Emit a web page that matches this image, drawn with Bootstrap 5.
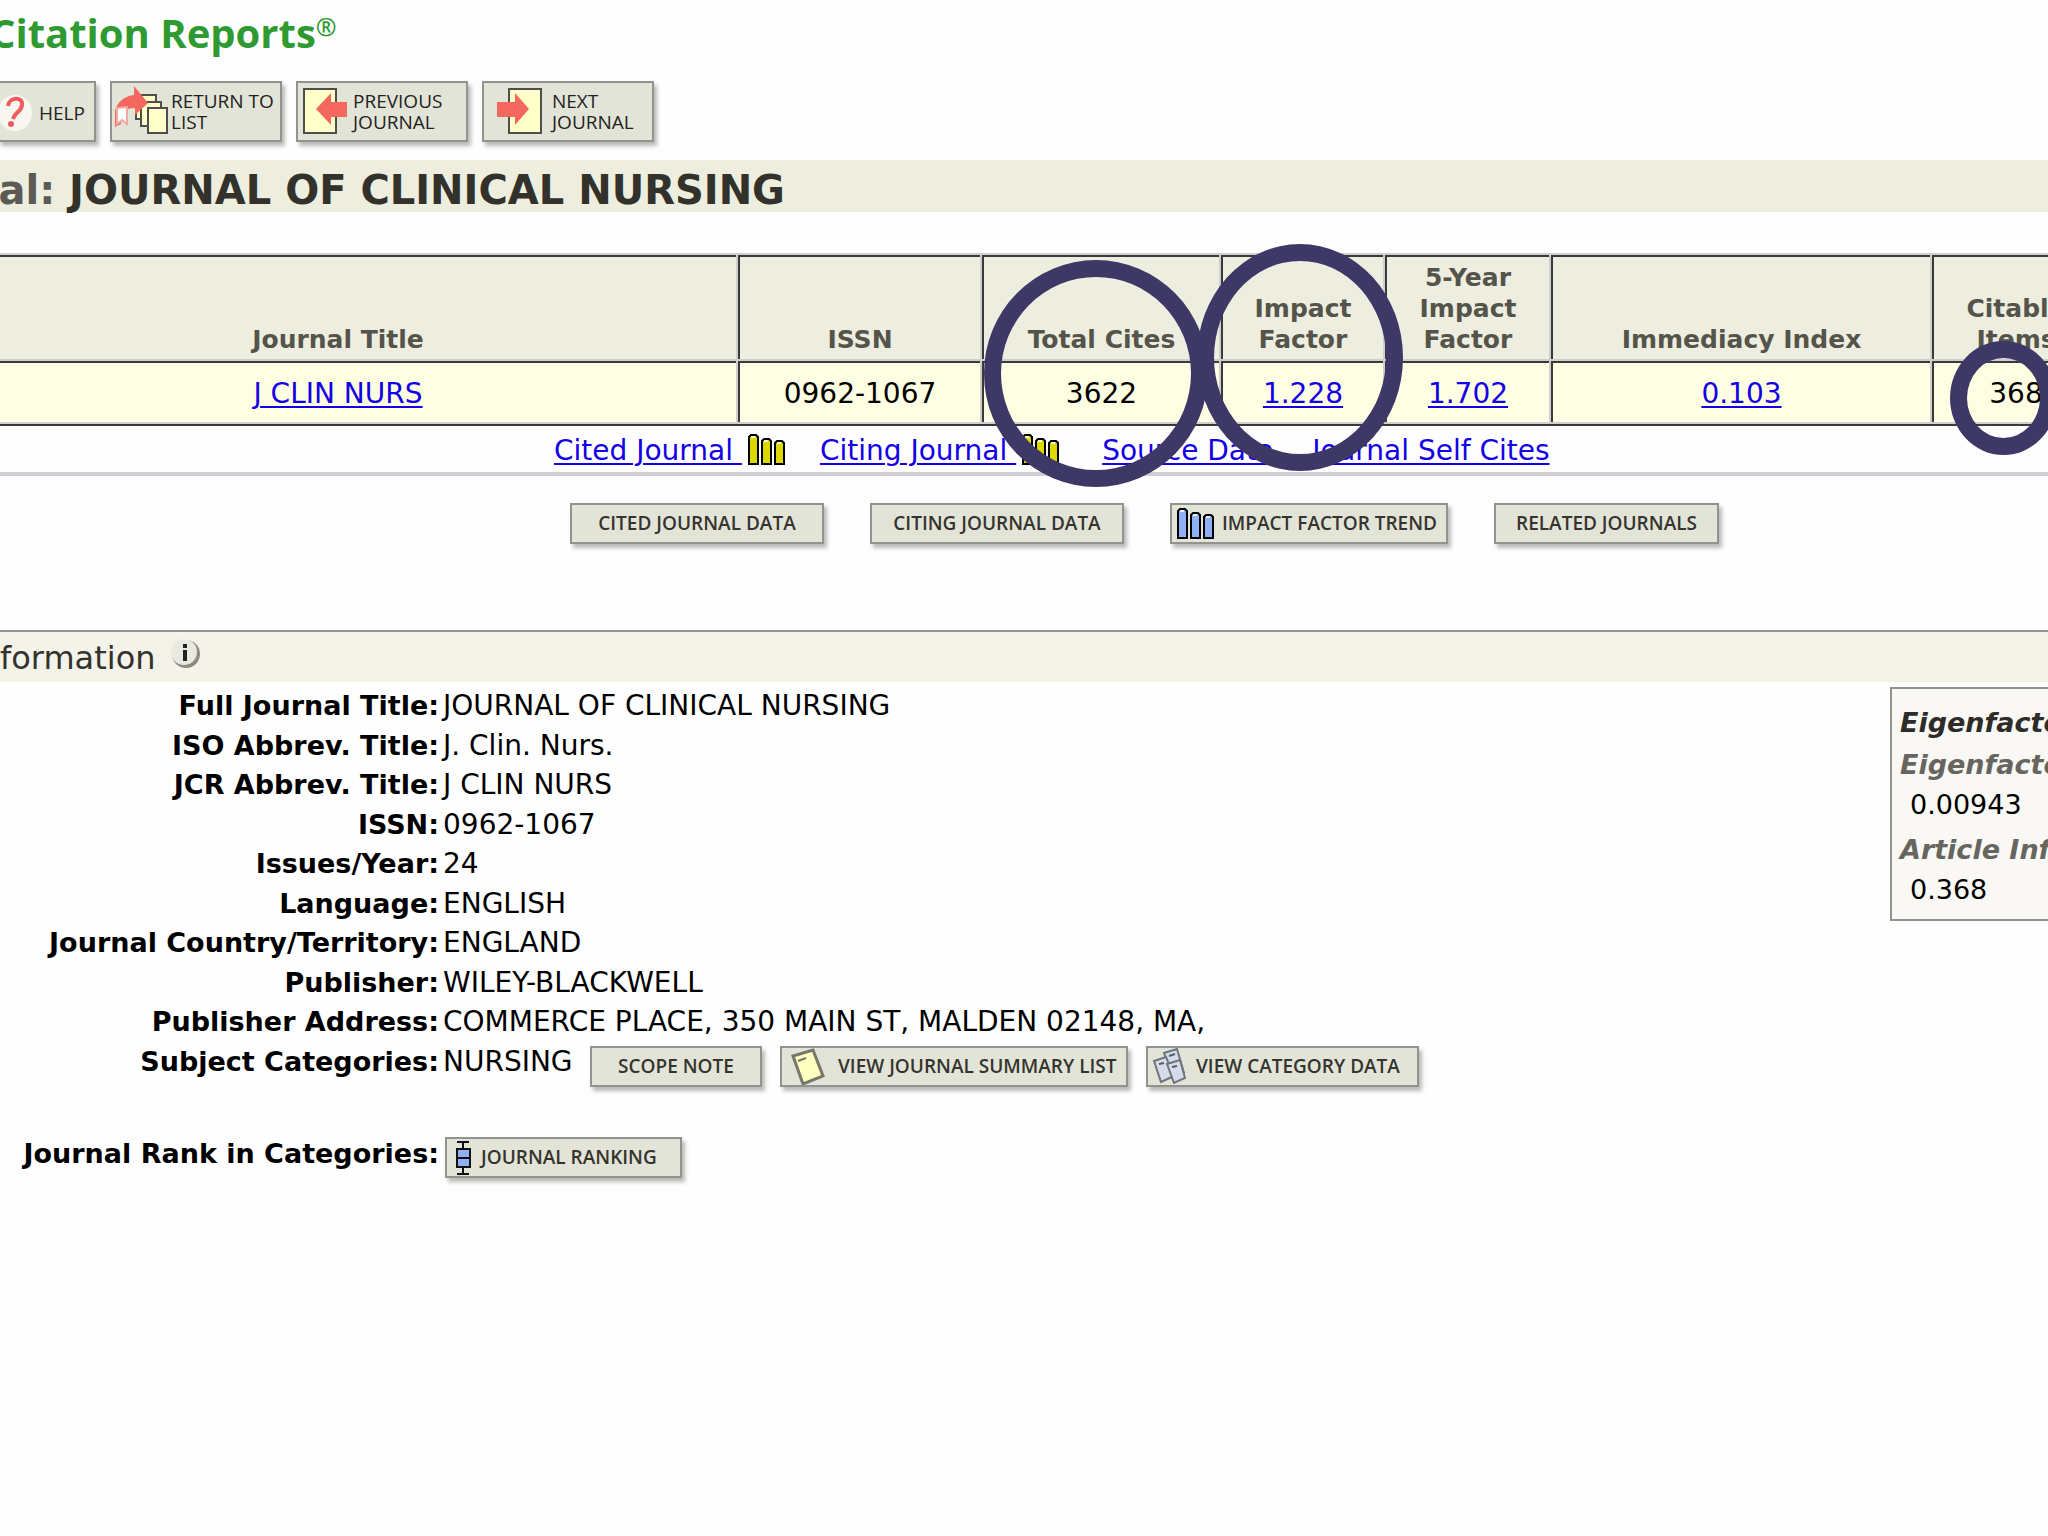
<!DOCTYPE html>
<html lang="en">
<head>
<meta charset="utf-8">
<meta name="viewport" content="width=device-width, initial-scale=1">
<title>Journal Citation Reports</title>
<link href="https://cdn.jsdelivr.net/npm/bootstrap@5.3.0/dist/css/bootstrap.min.css" rel="stylesheet">
<style>
body{font-family:"DejaVu Sans",Verdana,sans-serif;font-size:28px;line-height:39px;color:#000;background:#fefefe;overflow-x:hidden}
a{color:#1400e6;text-decoration:underline;text-underline-offset:3px;text-decoration-thickness:2px}
.brand-line{font:700 40px/50px "Open Sans","Noto Sans",sans-serif;color:#2e9a31;height:81px;padding-top:8px;margin-left:-10px;white-space:nowrap}
.brand-line sup{font-size:25px;top:-12px;line-height:0;font-weight:600}
.tool-row{gap:14px}
.tool-btn{font-family:"Open Sans","Noto Sans",sans-serif;font-size:19px;line-height:21px;color:#22221e;background:#e3e4d8;border:2px solid #92938f;border-radius:0;padding:0;box-shadow:3px 4px 4px #b9b9b6;text-align:left;display:inline-flex;align-items:center;white-space:nowrap}
.tool-btn svg{flex:none}
.big-btn{height:61px;width:172px;font-weight:500}
.help-btn{width:98px;margin-left:-2px;border-left:0}
.small-btn{height:41px;font-weight:600;color:#35342e}
.w-cite{width:254px}.w-trend{width:278px}.w-rel{width:225px}.w-scope{width:172px}.w-sum{width:348px}.w-cat{width:273px}.w-rank{width:237px}
.title-band{background:#edeedd;height:52px;margin-top:18px;font-size:40px;line-height:60px;font-weight:bold;color:#32312b;white-space:nowrap;margin-bottom:41px}
.title-band span{color:#5b5a54;margin-left:-30px}
.grid-table{width:calc(100% + 116px);table-layout:fixed;border-collapse:separate;border-spacing:2px;background:#cfcfcd;margin-left:-64px;border-bottom:2px solid #3a393c}
.grid-table th,.grid-table td{position:relative;text-align:center;border-left:2px solid #3a393c;border-top:2px solid #3a393c;padding:0}
.grid-table th{background:#edeedf;color:#55544b;font-size:25px;line-height:31px;height:104px;padding-bottom:4px;vertical-align:bottom}
.grid-table td{background:#fdfee2;height:60px;line-height:57px;padding-top:2px}
.c-title{width:798px}.c-issn{width:242px}.c-cites{width:237px}.c-impact{width:162px}.c-five{width:164px}.c-imm{width:379px}
.ring{position:absolute;z-index:2;border:17px solid #3d3866;border-radius:50%;pointer-events:none}
.ring-cites{left:0;top:-103px;width:224px;height:227px}
.ring-impact{left:-26px;top:-119px;width:206px;height:227px}
.ring-items{left:16px;top:-22px;width:107px;height:114px}
.link-row{height:50px;line-height:50px;padding-left:554px;border-bottom:4px solid #cfced2;white-space:nowrap}
.link-row svg{margin:8px 35px 0 5px}
.link-row .self-cites{margin-left:38px}
.link-row .source-data{margin-left:8px}
.btn-row{margin-top:27px;padding-left:570px;gap:46px}
.info-band{margin-top:86px;height:52px;background:#f3f3e9;border-top:2px solid #929292;font-size:32px;line-height:52px;color:#33322c}
.info-band svg{margin:5px 0 0 14px}
.facts{display:grid;grid-template-columns:439px 1fr;column-gap:4px;grid-template-rows:repeat(9,1fr) auto;height:401px;margin:4px 0 0}
.facts dt,.rank-label{font-size:27px;font-weight:bold;text-align:right;white-space:nowrap}
.facts dd{margin:0;white-space:nowrap}
.cat-name{width:147px}
.cat-btns{gap:18px}
.eigen-box{width:158px;height:234px;margin-top:5px;border:2px solid #929292;border-right:0;background:#f9f8f4;padding:13px 0 0 8px;overflow:hidden;white-space:nowrap;font-size:27px;line-height:42px}
.eigen-box em{display:block;font-weight:bold;color:#66665f}
.eigen-box em.top-line{color:#2d2c28}
.eigen-box span{display:block;padding-left:10px;line-height:37px;margin-bottom:6px}
.rank-row{margin-top:50px;padding-bottom:20px;gap:6px}
.rank-label{width:439px;line-height:34px}
</style>
<script src="https://cdn.jsdelivr.net/npm/bootstrap@5.3.0/dist/js/bootstrap.bundle.min.js"></script>
</head>
<body>
<svg class="d-none" aria-hidden="true">
  <symbol id="bars" viewBox="0 0 38 31">
    <g stroke="#000" stroke-width="2"><path d="M2 30V3l2-2h5l2 2v27z"/><path d="M15 30V7l2-2h5l2 2v23z"/><path d="M28 30V9l2-2h5l2 2v21z"/></g>
    <path d="M4 3h4M17 7h4M30 9h4" stroke="#fff" stroke-width="2" opacity=".8"/>
  </symbol>
</svg>
<header>
  <div class="brand-line">Citation Reports<sup>®</sup></div>
  <nav class="tool-row d-flex" aria-label="Journal tools">
    <button class="tool-btn big-btn help-btn" type="button"><svg width="41" height="50" viewBox="0 0 41 50"><ellipse cx="17" cy="26" rx="17" ry="18" fill="#f8f6f0"/><path d="M10 19c1-9 15-10 14-1-1 8-7 6-9 14" fill="none" stroke="#ee5c60" stroke-width="4"/><circle cx="13" cy="37" r="3" fill="#ee5c60"/></svg><span class="pt-1">HELP</span></button>
    <button class="tool-btn big-btn" type="button"><svg width="59" height="57" viewBox="0 0 59 57"><g fill="#ffffc9" stroke="#4e4e4a" stroke-width="2"><path d="M24 12h20v24H24z"/><path d="M29 19h20v24H29z"/><path d="M36 25h19v25H36z"/></g><path d="M3 28C5 18 14 13 22 12V3l14 17-13 12v-7c-10 0-13 4-14 16l-6 3z" fill="#f4675f"/><path d="M5 25l10-1v17l-5-4-5 4z" fill="#fff" stroke="#f3a9a1" stroke-width="2"/></svg><span>RETURN TO<br>LIST</span></button>
    <button class="tool-btn big-btn" type="button"><svg width="55" height="57" viewBox="0 0 55 57"><path d="M6 6h32v44H6z" fill="#ffffc9" stroke="#4e4e4a" stroke-width="2"/><path d="M18 26L33 10v9h16v15H33v8z" fill="#f4675f"/></svg><span>PREVIOUS<br>JOURNAL</span></button>
    <button class="tool-btn big-btn" type="button"><svg width="68" height="57" viewBox="0 0 68 57"><path d="M25 6h32v44H25z" fill="#ffffc9" stroke="#4e4e4a" stroke-width="2"/><path d="M45 26L31 10v9H13v15h18v8z" fill="#f4675f"/></svg><span>NEXT<br>JOURNAL</span></button>
  </nav>
  <h1 class="title-band"><span>nal:</span> JOURNAL OF CLINICAL NURSING</h1>
</header>
<main>
  <table class="grid-table">
    <colgroup><col class="c-title"><col class="c-issn"><col class="c-cites"><col class="c-impact"><col class="c-five"><col class="c-imm"><col></colgroup>
    <thead><tr><th>Journal Title</th><th>ISSN</th><th>Total Cites</th><th>Impact<br>Factor</th><th>5-Year<br>Impact<br>Factor</th><th>Immediacy Index</th><th>Citable<br>Items</th></tr></thead>
    <tbody><tr><td><a href="#">J CLIN NURS</a></td><td>0962-1067</td><td>3622<i class="ring ring-cites"></i></td><td><a href="#">1.228</a><i class="ring ring-impact"></i></td><td><a href="#">1.702</a></td><td><a href="#">0.103</a></td><td>368<i class="ring ring-items"></i></td></tr></tbody>
  </table>
  <div class="link-row d-flex">
    <a href="#">Cited Journal&nbsp;</a><svg width="38" height="31" fill="#dcd800"><use href="#bars"/></svg>
    <a href="#">Citing Journal&nbsp;</a><svg width="38" height="31" fill="#dcd800"><use href="#bars"/></svg>
    <a href="#" class="source-data">Source Data</a>
    <a href="#" class="self-cites">Journal Self Cites</a>
  </div>
  <div class="btn-row d-flex">
    <button class="tool-btn small-btn w-cite justify-content-center" type="button">CITED JOURNAL DATA</button>
    <button class="tool-btn small-btn w-cite justify-content-center" type="button">CITING JOURNAL DATA</button>
    <button class="tool-btn small-btn w-trend" type="button"><svg width="38" height="31" class="ms-1 me-2" fill="#8fb0f4"><use href="#bars"/></svg>IMPACT FACTOR TREND</button>
    <button class="tool-btn small-btn w-rel justify-content-center" type="button">RELATED JOURNALS</button>
  </div>
  <h2 class="info-band d-flex mb-0">formation<svg width="31" height="34" viewBox="0 0 31 34"><circle cx="16" cy="17" r="14" fill="#8b8b82"/><circle cx="14" cy="15" r="13" fill="#e9e9e0"/><path d="M15 7v4M15 13v11" stroke="#222" stroke-width="4"/></svg></h2>
  <div class="d-flex">
    <dl class="facts flex-grow-1">
      <dt>Full Journal Title:</dt><dd>JOURNAL OF CLINICAL NURSING</dd>
      <dt>ISO Abbrev. Title:</dt><dd>J. Clin. Nurs.</dd>
      <dt>JCR Abbrev. Title:</dt><dd>J CLIN NURS</dd>
      <dt>ISSN:</dt><dd>0962-1067</dd>
      <dt>Issues/Year:</dt><dd>24</dd>
      <dt>Language:</dt><dd>ENGLISH</dd>
      <dt>Journal Country/Territory:</dt><dd>ENGLAND</dd>
      <dt>Publisher:</dt><dd>WILEY-BLACKWELL</dd>
      <dt>Publisher Address:</dt><dd>COMMERCE PLACE, 350 MAIN ST, MALDEN 02148, MA,</dd>
      <dt>Subject Categories:</dt>
      <dd class="d-flex"><span class="cat-name">NURSING</span>
        <span class="cat-btns d-flex pt-1">
        <button class="tool-btn small-btn w-scope justify-content-center" type="button">SCOPE NOTE</button>
        <button class="tool-btn small-btn w-sum" type="button"><svg width="48" height="37" viewBox="0 0 48 37" class="me-2"><path d="M11 8l20-6 10 26-20 8z" fill="#ffffc0" stroke="#77776a" stroke-width="3"/><path d="M16 13l8-3" stroke="#77776a" stroke-width="2"/></svg>VIEW JOURNAL SUMMARY LIST</button>
        <button class="tool-btn small-btn w-cat" type="button"><svg width="40" height="37" viewBox="0 0 40 37" class="me-2"><g fill="#d4dceb" stroke="#70757c" stroke-width="2"><path d="M16 5l13-4 7 24-12 5z"/><path d="M6 13l12-4 8 19-13 6z"/><path d="M19 16l13-4 5 18-11 5z"/></g><path d="M21 8l6-2M11 16l5-1M24 19l5-1" stroke="#555c66" stroke-width="2"/></svg>VIEW CATEGORY DATA</button>
        </span></dd>
    </dl>
    <aside class="eigen-box flex-shrink-0"><em class="top-line">Eigenfactor</em><em>Eigenfactor</em><span>0.00943</span><em>Article Influence</em><span>0.368</span></aside>
  </div>
  <div class="rank-row d-flex">
    <div class="rank-label">Journal Rank in Categories:</div>
    <button class="tool-btn small-btn w-rank" type="button"><svg width="34" height="37" viewBox="0 0 34 37"><path d="M16 3v32M10 3h12M10 35h12" stroke="#111" stroke-width="2"/><path d="M10 10h13v18H10zM10 19h13" fill="#8fb0f4" stroke="#111" stroke-width="2"/></svg>JOURNAL RANKING</button>
  </div>
</main>
</body>
</html>
